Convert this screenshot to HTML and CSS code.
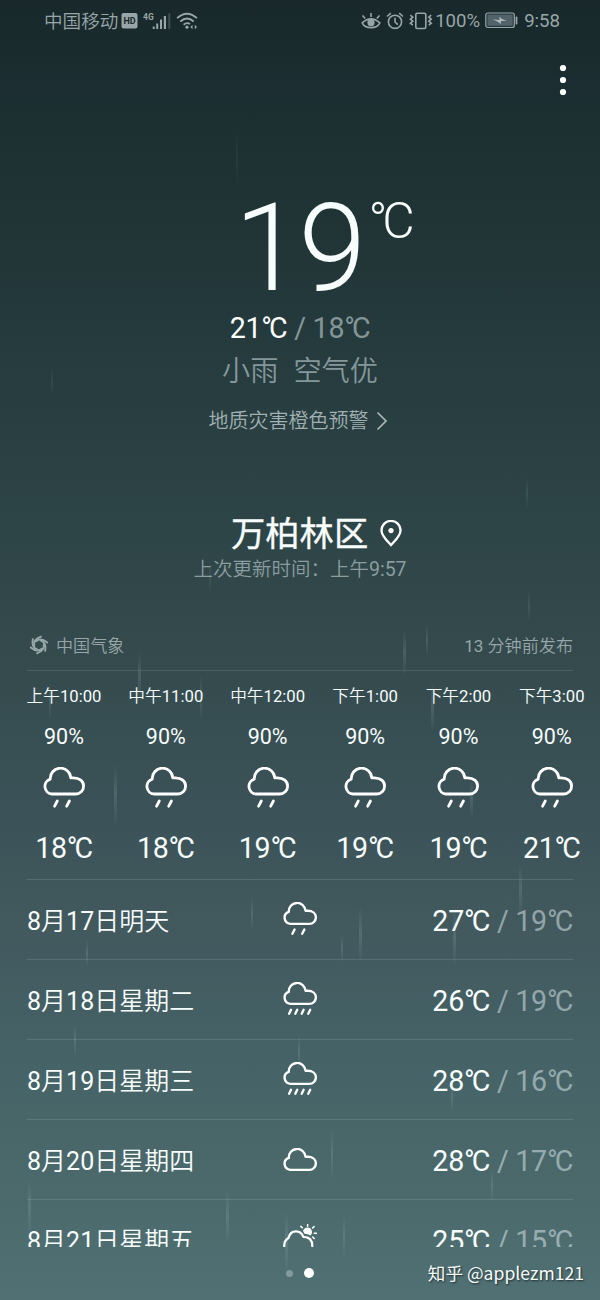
FILE: index.html
```
<!DOCTYPE html>
<html lang="zh-CN">
<head>
<meta charset="utf-8">
<title>天气</title>
<link rel="stylesheet" href="styles.css">
</head>
<body>
<svg class="defs" width="0" height="0" aria-hidden="true">
  <symbol id="cloud" viewBox="0 0 42 42"><path d="M9 27A7.6 7.6 0 0 1 7.2 12.2A10.3 10.3 0 0 1 27.8 10.8H30.5C36.5 10.8 40.6 14.2 40.6 18.9C40.6 23.6 37 27 32.5 27Z"/></symbol>
  <symbol id="rain2" viewBox="0 0 42 42"><use href="#cloud" width="42" height="42"/><path d="M14.3 34L11.6 39.2M26.4 34L23.7 39.2"/></symbol>
  <symbol id="rain4" viewBox="0 0 42 42"><use href="#cloud" width="42" height="42"/><path d="M9.9 34.2L7.5 39.2M17.6 34.2L15.2 39.2M25.5 34.2L23.1 39.2M33.6 34.2L31.2 39.2"/></symbol>
</svg>
<div class="screen">
  <svg class="drops" viewBox="0 0 600 1300">
    <defs><linearGradient id="fade" x1="0" y1="0" x2="0" y2="1"><stop offset="0" stop-color="#b4d0d2" stop-opacity="0"/><stop offset=".5" stop-color="#b4d0d2" stop-opacity=".16"/><stop offset="1" stop-color="#b4d0d2" stop-opacity=".02"/></linearGradient></defs>
    <g fill="url(#fade)">
      <rect x="236" y="130" width="2" height="55" opacity=".4"/><rect x="51" y="368" width="2" height="26" opacity=".6"/><rect x="526" y="478" width="2" height="30" opacity=".7"/><rect x="528" y="590" width="2" height="30" opacity=".7"/><rect x="209" y="562" width="2" height="30" opacity=".6"/>
      <rect x="403" y="630" width="3" height="44"/><rect x="426" y="624" width="2" height="32"/><rect x="138" y="652" width="3" height="48"/><rect x="200" y="676" width="2" height="42"/><rect x="49" y="682" width="2" height="36"/><rect x="431" y="682" width="3" height="48"/>
      <rect x="114" y="764" width="3" height="60"/><rect x="470" y="780" width="3" height="36"/><rect x="519" y="864" width="3" height="50"/><rect x="251" y="897" width="2" height="32"/><rect x="359" y="906" width="3" height="55"/><rect x="341" y="934" width="2" height="28"/><rect x="453" y="908" width="3" height="56"/>
      <rect x="86" y="940" width="2" height="26"/><rect x="74" y="1024" width="2" height="32"/><rect x="298" y="1034" width="2" height="34"/><rect x="451" y="1084" width="2" height="26"/><rect x="331" y="1128" width="2" height="50"/><rect x="491" y="1170" width="2" height="30"/><rect x="28" y="1180" width="3" height="54"/><rect x="226" y="1190" width="3" height="52"/><rect x="285" y="1212" width="3" height="58"/><rect x="343" y="1216" width="2" height="40"/>
    </g>
  </svg>

  <header class="status">
    <span class="carrier">中国移动</span>
    <svg class="hd" width="17" height="18" viewBox="0 0 17 18"><rect x=".5" y="1" width="16" height="15.5" rx="2" fill="#98a6a8"/><text x="8.5" y="12.3" text-anchor="middle" class="hd-text">HD</text></svg>
    <svg class="signal" width="28" height="18" viewBox="0 0 28 18"><text x="0" y="7.5" class="net-text">4G</text><g fill="#98a6a8"><rect x="9.7" y="14.5" width="2" height="2.5"/><rect x="13.2" y="11.5" width="2" height="5.5"/><rect x="17" y="7.5" width="2" height="9.5"/><rect x="20.8" y="4" width="2.2" height="13"/><rect x="25.3" y="1.5" width="2" height="15.5" opacity=".3"/></g></svg>
    <svg class="wifi" width="23" height="18" viewBox="0 0 23 18" fill="none" stroke="#98a6a8" stroke-width="1.8"><path d="M1 6.2Q11 -2.8 21 6.2M4.3 9.5Q11 3.5 17.7 9.5M7.6 12.7Q11 9.8 14 12"/><circle cx="11" cy="15.2" r="1.6" fill="#98a6a8" stroke="none"/><path d="M14.3 15l2.2-2.2v4.4zM21 15l-2.2-2.2v4.4z" fill="#98a6a8" stroke="none"/></svg>
    <span class="spacer"></span>
    <svg width="20" height="18" viewBox="0 0 20 18" fill="none" stroke="#98a6a8" stroke-width="1.6"><path d="M1.2 10.8Q10 2.8 18.8 10.8Q16.5 15.6 10 15.6Q3.5 15.6 1.2 10.8ZM10 5V1M4.2 6.5L1.5 3.5M15.8 6.5L18.5 3.5"/><circle cx="10" cy="10.7" r="2.8" fill="#98a6a8"/></svg>
    <svg class="alarm" width="18" height="18" viewBox="0 0 18 18" fill="none" stroke="#98a6a8" stroke-width="1.6"><circle cx="9" cy="9.8" r="6.6"/><path d="M9 5.8V10l2.8 2.6M1 4.5L4.8 1.2M13.2 1.2L17 4.5"/></svg>
    <svg class="vibrate" width="24" height="18" viewBox="0 0 24 18" fill="none" stroke="#98a6a8" stroke-width="1.6"><rect x="6.8" y="1.2" width="10" height="15.3" rx="1.5"/><path d="M1.4 3.2l2.4 2-2.4 2 2.4 2-2.4 2 2.4 2M22.2 3.2l-2.4 2 2.4 2-2.4 2 2.4 2-2.4 2"/></svg>
    <span class="percent">100%</span>
    <svg class="battery" width="33" height="17" viewBox="0 0 33 17"><rect x=".8" y="1" width="28.5" height="14.5" rx="2" fill="#26383b" stroke="#98a6a8" stroke-width="1.2"/><rect x="2.5" y="2.7" width="25.1" height="11.1" fill="#52646a"/><rect x="30.6" y="4.5" width="1.8" height="8" rx=".7" fill="#98a6a8"/><path d="M7.5 7.3L14.5 8.2L14.5 4.8L16.8 7L21.5 8.8L15.8 8.9L15.8 12L12.5 9.5Z" fill="#b4bfc1"/></svg>
    <span class="clock">9:58</span>
  </header>

  <div class="toolbar"><svg width="8" height="32" viewBox="0 0 8 32" fill="#fff"><circle cx="4" cy="4" r="3.1"/><circle cx="4" cy="16" r="3.1"/><circle cx="4" cy="28" r="3.1"/></svg></div>

  <section class="now">
    <div class="now-temp"><span class="big">19</span><span class="unit"><i class="deg">°</i>C</span></div>
    <div class="range today"><b>21<i class="deg">°</i>C</b><span> / 18<i class="deg">°</i>C</span></div>
    <div class="condition"><span>小雨</span><span>空气优</span></div>
    <div class="alert">地质灾害橙色预警<svg width="12" height="20" viewBox="0 0 12 20" fill="none" stroke="#aab6b8" stroke-width="1.7"><path d="M1.5 1.5L10 10L1.5 18.5"/></svg></div>
  </section>

  <section class="place">
    <h1>万柏林区<svg width="22" height="28" viewBox="0 0 22 28" fill="none" stroke="#fff" stroke-width="2.3"><path d="M11 25C7 20.5 1.5 16 1.5 10.4A9.5 9.5 0 0 1 20.5 10.4C20.5 16 15 20.5 11 25Z"/><circle cx="11" cy="10.6" r="2.6" fill="#fff" stroke="none"/></svg></h1>
    <p>上次更新时间：上午<b>9:57</b></p>
  </section>

  <main class="forecast">
    <div class="source">
      <svg width="20" height="20" viewBox="0 0 20 20" fill="none" stroke="#97a8aa" stroke-width="1.9" stroke-linecap="round">
        <path id="blade" d="M5.2 10.6Q4.2 4.4 12 1.7"/>
        <use href="#blade" transform="rotate(60 10 10)"/><use href="#blade" transform="rotate(120 10 10)"/><use href="#blade" transform="rotate(180 10 10)"/><use href="#blade" transform="rotate(240 10 10)"/><use href="#blade" transform="rotate(300 10 10)"/>
      </svg>
      <span>中国气象</span><span class="published"><b>13</b> 分钟前发布</span>
    </div>
    <div class="hours">
      <div class="hour"><time>上午<b>10:00</b></time><span class="chance">90%</span><svg class="icon"><use href="#rain2"/></svg><span class="degrees">18<i class="deg">°</i>C</span></div>
      <div class="hour"><time>中午<b>11:00</b></time><span class="chance">90%</span><svg class="icon"><use href="#rain2"/></svg><span class="degrees">18<i class="deg">°</i>C</span></div>
      <div class="hour"><time>中午<b>12:00</b></time><span class="chance">90%</span><svg class="icon"><use href="#rain2"/></svg><span class="degrees">19<i class="deg">°</i>C</span></div>
      <div class="hour"><time>下午<b>1:00</b></time><span class="chance">90%</span><svg class="icon"><use href="#rain2"/></svg><span class="degrees">19<i class="deg">°</i>C</span></div>
      <div class="hour"><time>下午<b>2:00</b></time><span class="chance">90%</span><svg class="icon"><use href="#rain2"/></svg><span class="degrees">19<i class="deg">°</i>C</span></div>
      <div class="hour"><time>下午<b>3:00</b></time><span class="chance">90%</span><svg class="icon"><use href="#rain2"/></svg><span class="degrees">21<i class="deg">°</i>C</span></div>
    </div>
    <div class="day"><span class="date"><b>8</b>月<b>17</b>日明天</span><svg class="icon"><use href="#rain2"/></svg><div class="range"><b>27<i class="deg">°</i>C</b><span> / 19<i class="deg">°</i>C</span></div></div>
    <div class="day"><span class="date"><b>8</b>月<b>18</b>日星期二</span><svg class="icon"><use href="#rain4"/></svg><div class="range"><b>26<i class="deg">°</i>C</b><span> / 19<i class="deg">°</i>C</span></div></div>
    <div class="day"><span class="date"><b>8</b>月<b>19</b>日星期三</span><svg class="icon"><use href="#rain4"/></svg><div class="range"><b>28<i class="deg">°</i>C</b><span> / 16<i class="deg">°</i>C</span></div></div>
    <div class="day"><span class="date"><b>8</b>月<b>20</b>日星期四</span><svg class="icon dry"><use href="#cloud"/></svg><div class="range"><b>28<i class="deg">°</i>C</b><span> / 17<i class="deg">°</i>C</span></div></div>
    <div class="day"><span class="date"><b>8</b>月<b>21</b>日星期五</span><svg class="icon sunny" viewBox="0 0 34 34"><path d="M1.2 22Q1.2 16.2 5.5 13.9Q7.2 7.4 13 7.4Q18.3 7.4 20.3 12.8Q29.3 12.8 29.3 22"/><path d="M20 6.8A4.6 4.6 0 1 1 28.5 10.2L27.6 11.6Q24.8 9.8 21.5 9.8Z" fill="#fff" stroke="none"/><path d="M24.6 2.2V.6M19.3 3.8L17.8 2.4M29.6 4L31 2.6M31.2 9.3H33.4M29.8 13.1L31.2 14.5" stroke-width="1.5"/></svg><div class="range"><b>25<i class="deg">°</i>C</b><span> / 15<i class="deg">°</i>C</span></div></div>
  </main>

  <footer class="footer"><div class="pager"><i class="dot"></i><i class="dot active"></i></div><span class="mark">知乎 @applezm121</span></footer>
</div>
</body>
</html>
```

FILE: styles.css
```
* { box-sizing: border-box; }
body { margin: 0; font-family: Roboto, "Noto Sans CJK SC", sans-serif; font-weight: 400; color: #f7fcfc; }
b { font-weight: 400; }
.defs { position: absolute; }
.screen { position: relative; width: 600px; height: 1300px; overflow: hidden; background: linear-gradient(#18282b 0, #1b2d30 80px, #203436 220px, #263c3e 370px, #2e4548 530px, #344a4d 650px, #3a5257 800px, #42595e 930px, #456266 1050px, #4b696b 1180px, #507073 1300px); display: flex; flex-direction: column; }
.drops { position: absolute; inset: 0; width: 600px; height: 1300px; pointer-events: none; }
svg { flex: none; }

.status { display: flex; align-items: center; height: 41px; padding: 0 40px 0 44px; color: #98a6a8; font-size: 18.6px; white-space: nowrap; }
.carrier { margin-top: -3px; font-weight: 350; }
.hd { margin-left: 3px; }
.hd-text { font: 700 9px Roboto, sans-serif; fill: #18292c; }
.net-text { font: 700 8.5px Roboto, sans-serif; fill: #98a6a8; }
.signal { margin-left: 5px; }
.wifi { margin-left: 5px; }
.spacer { flex: 1; }
.alarm { margin-left: 5px; }
.vibrate { margin-left: 5px; }
.percent { margin-left: 2px; }
.battery { margin: 0 6px 0 5px; }

.toolbar { height: 79px; padding: 23px 33px 0; text-align: right; }

.now { display: flex; flex-direction: column; align-items: center; height: 380px; }
.now-temp { display: flex; align-items: flex-start; height: 190px; padding: 57px 0 0 49px; font-weight: 300; }
.big { font-size: 122px; line-height: 144px; letter-spacing: -3.5px; }
.unit { margin: 14px 0 0 6px; font-size: 50px; line-height: 60px; }
.deg { font-style: normal; letter-spacing: -.105em; }
.range { font-size: 28.6px; line-height: 36px; letter-spacing: -.25px; white-space: pre; }
.range span { color: rgba(225, 240, 242, .52); }
.today { color: #fff; }
.condition { display: flex; gap: 15px; margin-top: 5px; font-size: 28.2px; line-height: 42px; font-weight: 350; color: #84979a; }
.alert { display: flex; align-items: center; gap: 7px; margin: 13px 4px 0 0; font-size: 20px; line-height: 30px; font-weight: 350; color: #a1b0b2; }

.place { height: 128px; padding-top: 12px; }
.place h1 { display: flex; align-items: center; gap: 12px; margin: 0; padding-left: 231px; font-size: 34.3px; line-height: 45px; font-weight: 400; -webkit-text-stroke: .35px #f7fcfc; }
.place h1 svg { margin-top: -2px; }
.place p { margin: 0; font-size: 19.5px; line-height: 26px; font-weight: 350; text-align: center; color: #8b9c9e; }

.forecast { height: 619px; overflow: hidden; }
.source { display: flex; align-items: center; height: 43px; margin: 0 27px; padding: 0 0 9px 2px; border-bottom: 1px solid rgba(190, 215, 217, .15); color: #97a7a9; font-size: 17.1px; font-weight: 350; }
.source svg { margin-right: 7px; }
.published { margin-left: auto; }
.hours { display: grid; grid-template-columns: repeat(3, 74px) repeat(3, 65.5px); gap: 27.8px; height: 208px; padding: 13px 0 0 27px; }
.hour { display: flex; flex-direction: column; align-items: center; white-space: nowrap; }
.hour time { font-size: 16.7px; line-height: 26px; font-weight: 350; }
.chance { margin-top: 13px; font-size: 21.5px; line-height: 28px; }
.icon { width: 42px; height: 42px; fill: none; stroke: #fff; stroke-width: 2.8; stroke-linecap: round; stroke-linejoin: round; }
.hour .icon { margin-top: 16px; }
.degrees { margin-top: 21px; font-size: 28.6px; line-height: 36px; letter-spacing: -.25px; }
.day { display: grid; grid-template-columns: 1fr 34px 1fr; align-items: center; height: 80px; margin: 0 27px; padding-top: 2px; border-top: 1px solid rgba(190, 215, 217, .17); font-size: 25px; }
.date { margin-top: -4px; font-weight: 350; }
.day .icon { width: 34px; height: 34px; margin-top: -4px; stroke-width: 2.9; }
.day .dry { margin-top: 8px; }
.day .sunny { stroke-width: 2.3; margin-top: 0; }
.day .range { text-align: right; }

.footer { display: grid; grid-template-columns: 1fr auto 1fr; align-items: center; height: 50px; padding: 0 16px 0 15px; }
.pager { grid-column: 2; display: flex; align-items: center; gap: 11px; padding-top: 2px; }
.dot { width: 7px; height: 7px; border-radius: 50%; background: #829b9e; }
.active { width: 10px; height: 10px; background: #fff; }
.mark { justify-self: end; font: 400 17.6px "Noto Sans CJK SC", sans-serif; text-shadow: 1px 1px 2px rgba(0, 0, 0, .6); white-space: nowrap; }
```
